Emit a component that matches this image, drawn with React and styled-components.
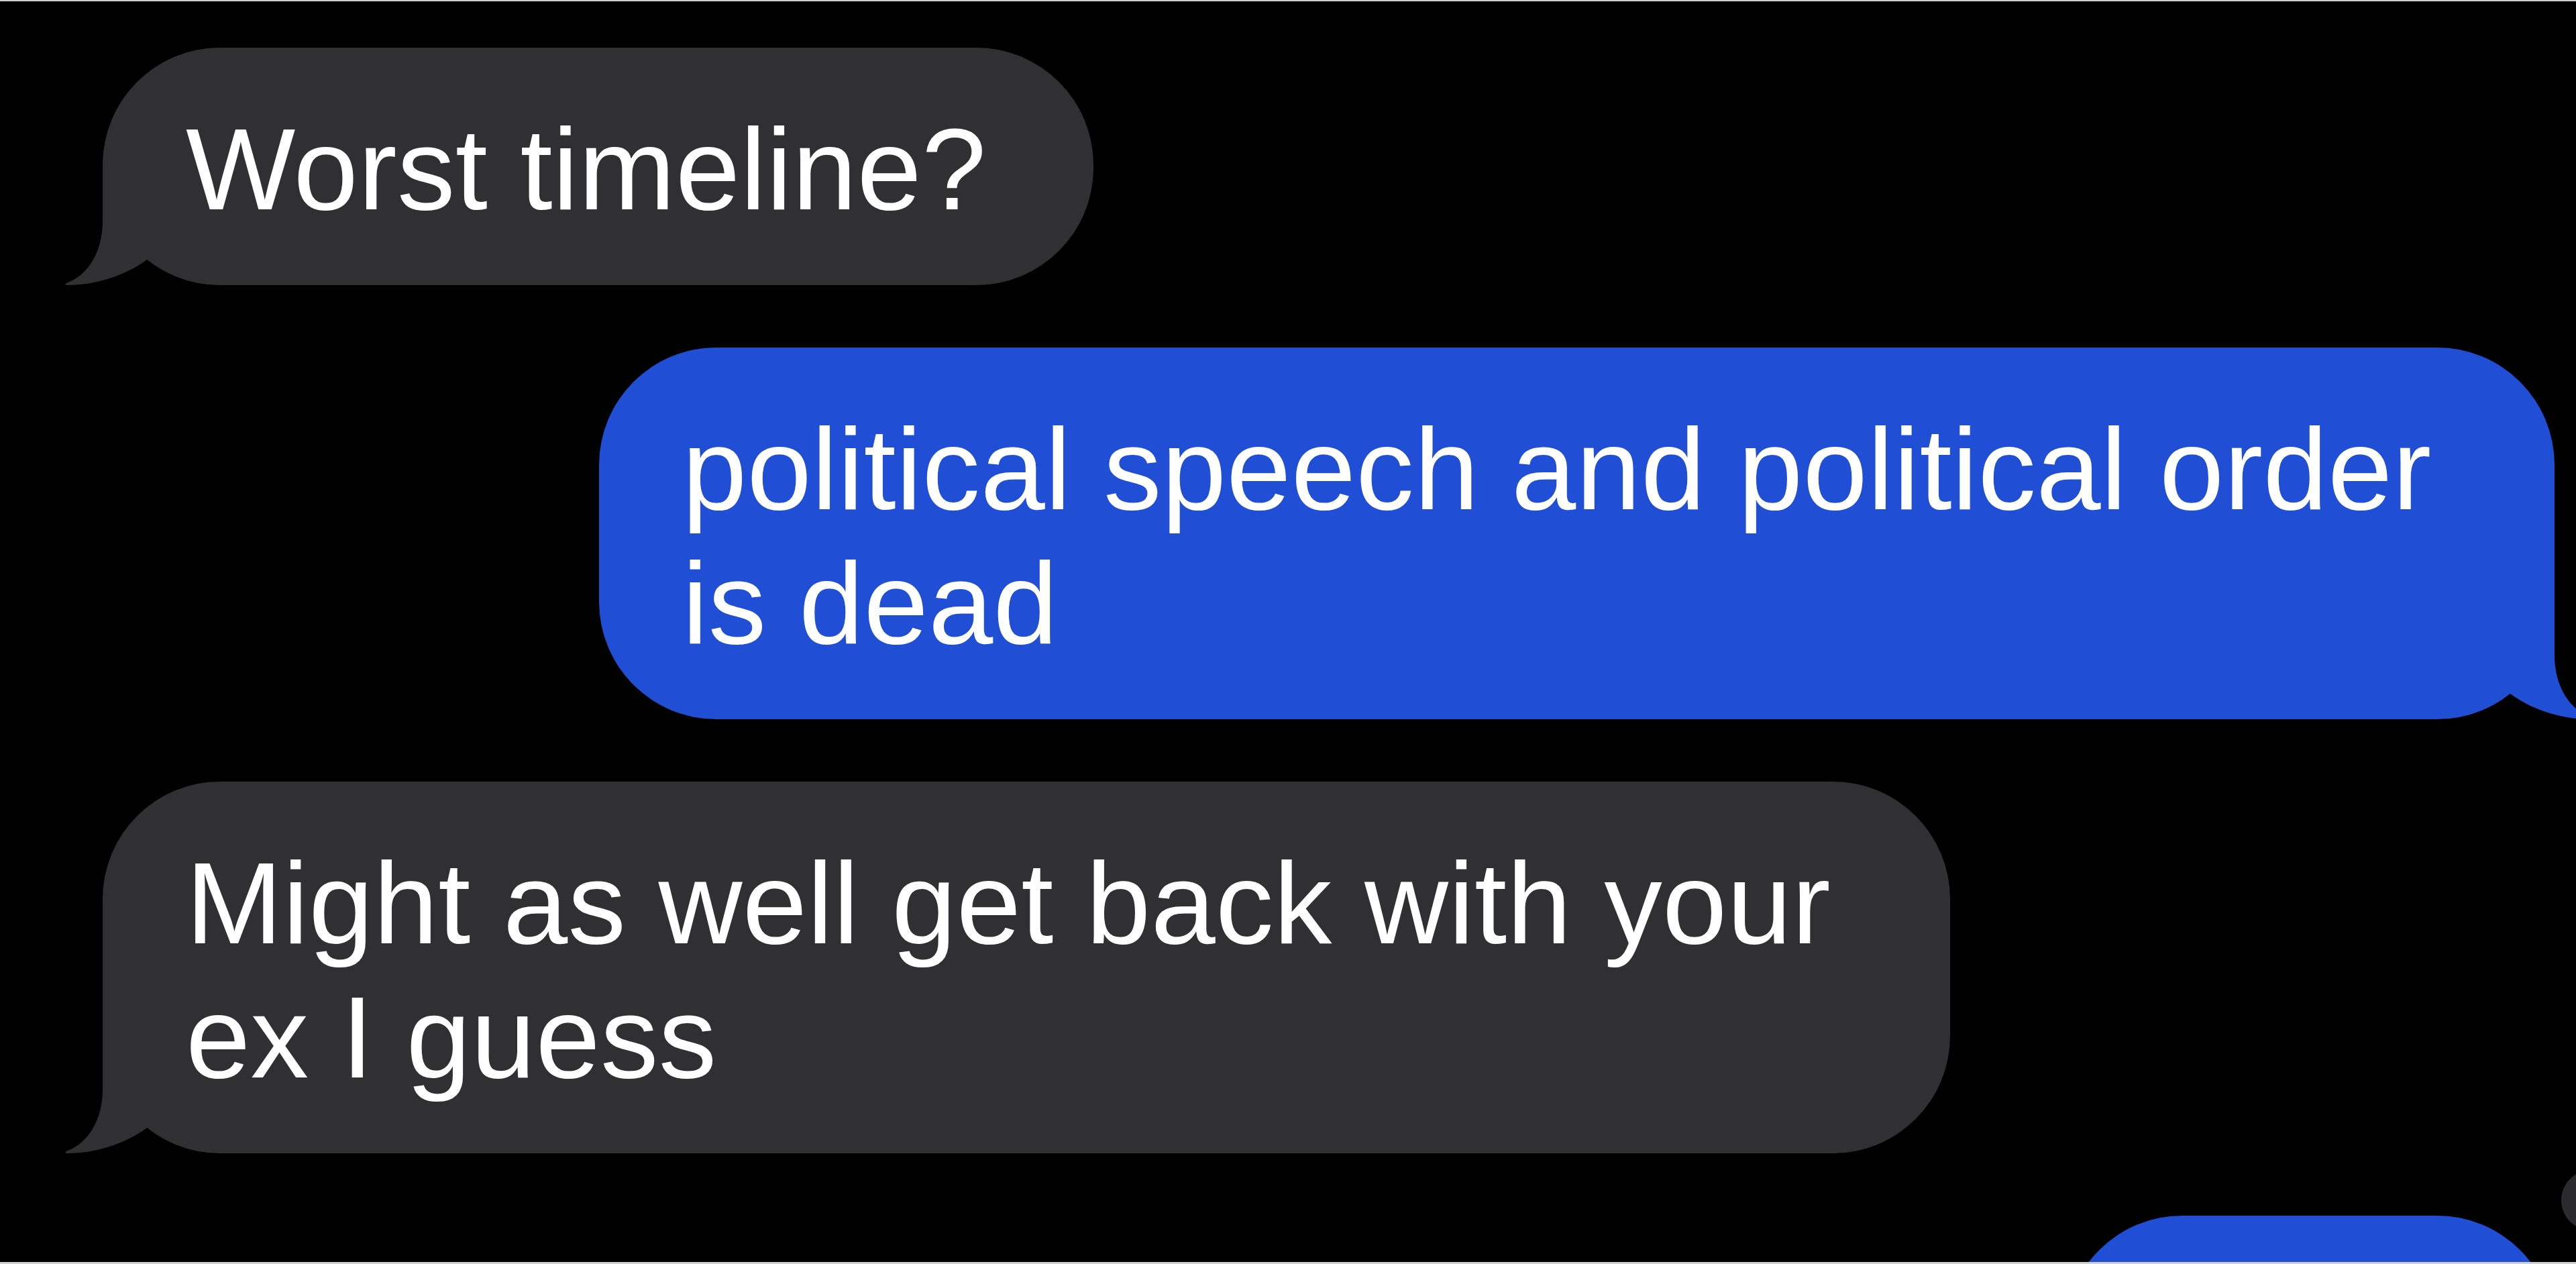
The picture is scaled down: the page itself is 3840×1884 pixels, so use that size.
import React from "react";
import styled, { createGlobalStyle } from "styled-components";

const GlobalStyle = createGlobalStyle`
  * { box-sizing: border-box; }
  html, body {
    margin: 0;
    padding: 0;
    width: 3840px;
    height: 1884px;
    overflow: hidden;
    background: #000;
  }
  #root { width: 3840px; height: 1884px; }
`;

const Screen = styled.main`
  position: relative;
  width: 3840px;
  height: 1884px;
  overflow: hidden;
  background: #000;
  border-top: 2px solid #cfcfcf;
  border-bottom: 3px solid #cfcfcf;
  padding: 69px 32px 0 153px;
  display: flex;
  flex-direction: column;
  gap: 93px;
  font-family: "Liberation Sans", Arial, "Noto Sans", sans-serif;
`;

const Row = styled.div`
  display: flex;
  justify-content: ${(p) => (p.$out ? "flex-end" : "flex-start")};
  flex-shrink: 0;
`;

const Bubble = styled.div`
  position: relative;
  max-width: ${(p) => (p.$out ? "2915px" : "2754px")};
  ${(p) => (p.$width ? `width: ${p.$width}px;` : "")}
  padding: ${(p) => (p.$out ? "81px 124px 73px 124px" : "81px 160px 73px 124px")};
  border-radius: 175px;
  background: ${(p) => (p.$out ? "#204fd5" : "#303032")};
  color: #ffffff;
  font-size: 173px;
  line-height: 200px;
  letter-spacing: 0.3px;
  white-space: normal;
`;

const TailSvg = styled.svg`
  position: absolute;
  bottom: 0;
  width: 130px;
  height: 175px;
  ${(p) =>
    p.$out
      ? "right: -60px; transform: scaleX(-1);"
      : "left: -60px;"}
  fill: ${(p) => (p.$out ? "#204fd5" : "#303032")};
  pointer-events: none;
`;

const Dot = styled.div`
  position: absolute;
  right: -68px;
  top: 1742px;
  width: 90px;
  height: 90px;
  border-radius: 50%;
  background: #2b2b2d;
`;

function Tail({ out }) {
  return (
    <TailSvg $out={out} viewBox="-60 -175 130 175" aria-hidden="true">
      <path d="M0,-175 L0,-95 C0,-50 -22,-15 -52,-4 C-57,-2 -57,0 -51,0 C-12,0 34,-14 66,-38 L66,-175 Z" />
    </TailSvg>
  );
}

function Message({ out, children, width }) {
  return (
    <Row $out={out}>
      <Bubble $out={out} $width={width}>
        {children}
        <Tail out={out} />
      </Bubble>
    </Row>
  );
}

export default function App() {
  return (
    <>
      <GlobalStyle />
      <Screen>
        <Message>Worst timeline?</Message>
        <Message out>political speech and political order is dead</Message>
        <Message>Might as well get back with your ex I guess</Message>
        <Message out width={730}>
          <span aria-hidden="true">&nbsp;</span>
        </Message>
        <Dot />
      </Screen>
    </>
  );
}
